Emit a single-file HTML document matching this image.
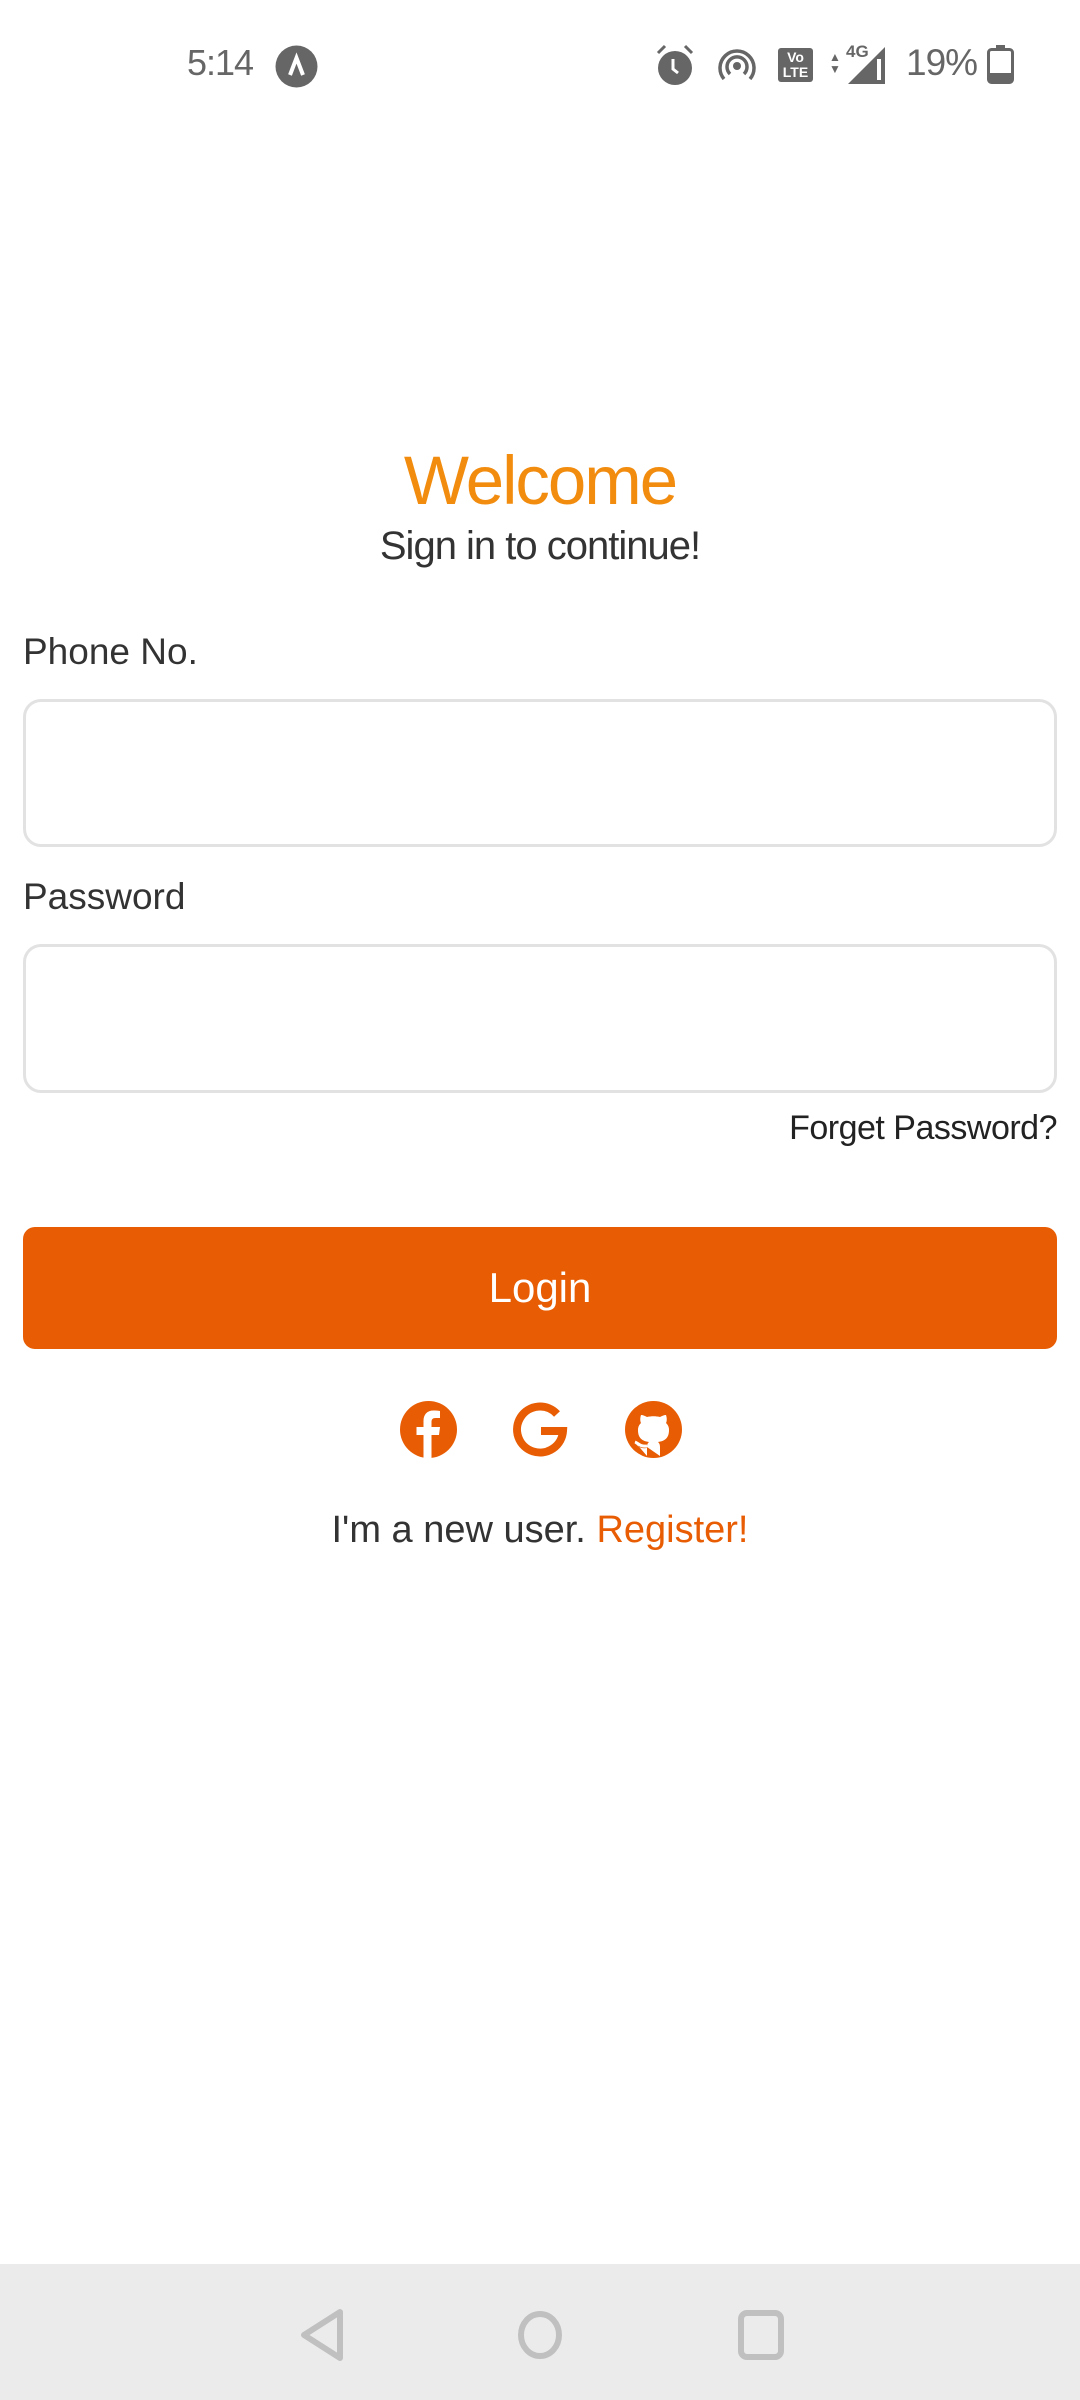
<!DOCTYPE html>
<html><head><meta charset="utf-8"><style>
*{margin:0;padding:0;box-sizing:border-box}
body{width:1080px;height:2400px;background:#fff;position:relative;overflow:hidden;font-family:"Liberation Sans",sans-serif;color:#333}
.a{position:absolute}
.input{position:absolute;left:23px;width:1034px;border:3px solid #e2e2e2;border-radius:18px;background:#fff}
</style></head><body>
<div class="a" style="left:187px;top:42px;font-size:36px;color:#666;letter-spacing:-1px">5:14</div>
<svg class="a" style="left:274px;top:44px" width="45" height="45" viewBox="0 0 45 45"><circle cx="22.5" cy="22.5" r="21" fill="#666"/><path d="M16 31 L22.5 14 L29 31" stroke="#fff" stroke-width="4" fill="none"/></svg>
<svg class="a" style="left:655px;top:43px" width="40" height="44" viewBox="0 0 40 44"><path d="M3 10 L10 3 M37 10 L30 3" stroke="#666" stroke-width="3"/><circle cx="20" cy="25" r="17" fill="#666"/><path d="M18 16 V26 L23 30" stroke="#fff" stroke-width="3" fill="none"/></svg>
<svg class="a" style="left:718px;top:47px" width="38" height="38" viewBox="0 0 38 38"><circle cx="19" cy="19" r="4" fill="#666"/><path d="M12 27 A10 10 0 1 1 26 27 M6 32 A17 17 0 1 1 32 32" stroke="#666" stroke-width="3.5" fill="none"/></svg>
<div class="a" style="left:778px;top:48px;width:35px;height:34px;background:#666;border-radius:3px;color:#fff;font-size:14px;font-weight:bold;line-height:15px;text-align:center;padding-top:2px">Vo<br>LTE</div>
<div class="a" style="left:829px;top:51px;font-size:12px;color:#666;line-height:12px">▲<br>▼</div>
<div class="a" style="left:846px;top:42px;font-size:17px;font-weight:bold;color:#666">4G</div>
<svg class="a" style="left:848px;top:47px" width="38" height="37" viewBox="0 0 38 37"><path d="M37 0 V37 H0 Z" fill="#666"/><rect x="29" y="12" width="4" height="21" fill="#fff"/></svg>
<div class="a" style="left:906px;top:42px;font-size:37px;color:#666;letter-spacing:-1px">19%</div>
<svg class="a" style="left:987px;top:45px" width="27" height="39" viewBox="0 0 27 39"><rect x="9" y="0" width="9" height="4" fill="#666"/><rect x="1.5" y="4.5" width="24" height="33" rx="3" fill="none" stroke="#666" stroke-width="3"/><rect x="3" y="28" width="21" height="8" fill="#666"/></svg>

<div class="a" style="left:0;width:1080px;top:441px;text-align:center;font-size:69px;color:#F28C0F;letter-spacing:-2px">Welcome</div>
<div class="a" style="left:0;width:1080px;top:524px;text-align:center;font-size:40px;color:#333;letter-spacing:-1px">Sign in to continue!</div>
<div class="a" style="left:23px;top:631px;font-size:37px;color:#333">Phone No.</div>
<div class="input" style="top:699px;height:148px"></div>
<div class="a" style="left:23px;top:876px;font-size:37px;color:#333">Password</div>
<div class="input" style="top:944px;height:149px"></div>
<div class="a" style="right:23px;top:1109px;font-size:34px;color:#222;letter-spacing:-0.5px">Forget Password?</div>
<div class="a" style="left:23px;top:1227px;width:1034px;height:122px;background:#E85D04;border-radius:12px;color:#fff;font-size:42px;text-align:center;line-height:122px">Login</div>

<svg class="a" style="left:400px;top:1401px" width="57" height="57" viewBox="0 0 57 57"><circle cx="28.5" cy="28.5" r="28.5" fill="#E85D04"/><path d="M31.5 57 V34 H39 L40 26 H31.5 V21 C31.5 18.5 32.5 17 35.5 17 H40 V10 C38 9.7 36 9.5 33.5 9.5 C27 9.5 23.5 13.5 23.5 20 V26 H16.5 V34 H23.5 V57 Z" fill="#fff"/></svg>
<svg class="a" style="left:512px;top:1401px" width="57" height="57" viewBox="0 0 57 57"><path d="M45 13 A23 23 0 1 0 51 30 H29" stroke="#E85D04" stroke-width="8" fill="none"/></svg>
<svg class="a" style="left:625px;top:1401px" width="57" height="57" viewBox="0 0 57 57"><circle cx="28.5" cy="28.5" r="28.5" fill="#E85D04"/><path d="M22 55 V47 C15 48 12 45 10 41 M35 55 V46 C35 43 34 42 33 41 C40 40 44 37 44 29 C44 26 43 24 41 22 C42 20 42 17 41 14 C39 14 37 15 35 16 C31 15 26 15 22 16 C20 15 18 14 16 14 C15 17 15 20 16 22 C14 24 13 26 13 29 C13 37 17 40 24 41 C23 42 22 43 22 46" fill="#fff"/><path d="M10 41 C13 42 15 46 22 45" stroke="#fff" stroke-width="3" fill="none"/></svg>

<div class="a" style="left:0;width:1080px;top:1509px;text-align:center;font-size:38px;color:#333">I'm a new user. <span style="color:#E85D04">Register!</span></div>

<div class="a" style="left:0;top:2264px;width:1080px;height:136px;background:#ebebeb"></div>
<svg class="a" style="left:300px;top:2308px" width="46" height="54" viewBox="0 0 46 54"><path d="M40 4 V50 L4 27 Z" stroke="#c0c0c0" stroke-width="6" stroke-linejoin="round" fill="none"/></svg>
<svg class="a" style="left:514px;top:2308px" width="52" height="54" viewBox="0 0 52 54"><ellipse cx="26" cy="27" rx="19" ry="21" stroke="#c0c0c0" stroke-width="6" fill="none"/></svg>
<svg class="a" style="left:736px;top:2308px" width="50" height="54" viewBox="0 0 50 54"><rect x="5" y="5" width="40" height="44" rx="6" stroke="#c0c0c0" stroke-width="6" fill="none"/></svg>
</body></html>
